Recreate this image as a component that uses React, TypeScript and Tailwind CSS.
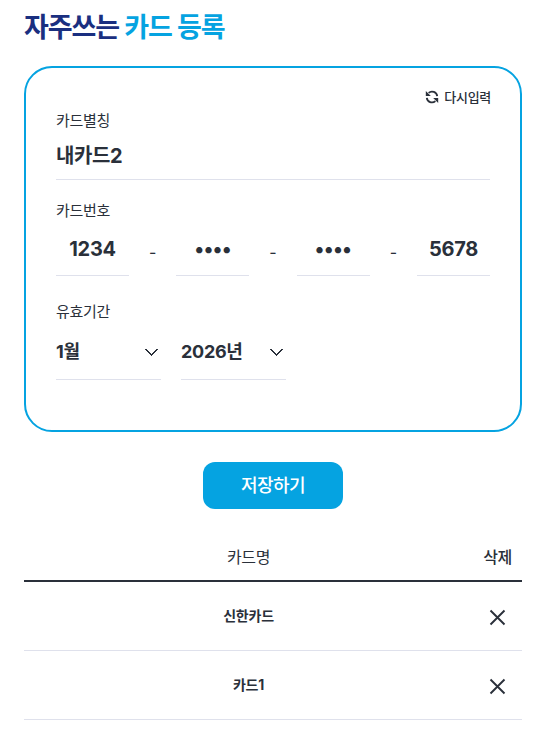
import { useState } from "react";

interface Card {
  id: number;
  name: string;
}

interface SelectBoxProps {
  value: string;
}

const ReloadIcon = () => (
  <svg width="14" height="14" viewBox="0 0 14 14" fill="none" stroke="#2a303a" strokeWidth="1.8">
    <path d="M3.6 2.9A5.2 5.2 0 0 1 12.2 6.2" />
    <path d="M10.4 11.1A5.2 5.2 0 0 1 1.8 7.8" />
    <path d="M0.8 1V6H5.8Z" fill="#2a303a" stroke="none" />
    <path d="M13.2 13V8H8.2Z" fill="#2a303a" stroke="none" />
  </svg>
);

const CloseIcon = () => (
  <svg width="17" height="17" viewBox="0 0 17 17" fill="none" stroke="#2a303a" strokeWidth="1.9">
    <path d="M1.5 1.5L15.5 15.5M15.5 1.5L1.5 15.5" />
  </svg>
);

const SelectBox = ({ value }: SelectBoxProps) => (
  <button
    type="button"
    className="flex h-[53px] w-[105px] items-center justify-between border-b border-[#dfe1ec] pr-[2px] pb-[2px] text-left"
  >
    <span className="text-[18px] font-bold leading-none tracking-[-0.3px]">{value}</span>
    <svg
      width="15"
      height="9"
      viewBox="0 0 15 9"
      fill="none"
      stroke="#2a303a"
      strokeWidth="1.4"
      shapeRendering="crispEdges"
    >
      <path d="M1.3 1.2L7.5 7.4L13.7 1.2" />
    </svg>
  </button>
);

const Label = ({ children }: { children: string }) => (
  <div className="h-5 text-[15px] leading-[22px] tracking-[-0.3px]">{children}</div>
);

const App = () => {
  const [numbers, setNumbers] = useState(["1234", "••••", "••••", "5678"]);
  const [cards, setCards] = useState<Card[]>([
    { id: 1, name: "신한카드" },
    { id: 2, name: "카드1" },
  ]);

  const handleReset = () => {
    setNumbers(["", "", "", ""]);
  };

  const handleDelete = (id: number) => {
    setCards((prev) => prev.filter((card) => card.id !== id));
  };

  return (
    <div className="h-[744px] w-[548px] overflow-hidden bg-white pl-6 pr-[26px] font-['Inter','Noto_Sans_CJK_KR',sans-serif] text-[#2a303a]">
      <h1 className="h-[66px] pt-[8px] text-[27px] font-bold leading-10 tracking-[-1.1px] text-[#1a2f80]">
        자주쓰는 <span className="text-[#05a3e1]">카드 등록</span>
      </h1>

      <div className="h-[366px] rounded-[28px] border-2 border-[#05a3e1] px-[30px] pt-[18px]">
        <div className="-mr-px flex h-6 items-start justify-end pt-1">
          <button
            type="button"
            onClick={handleReset}
            className="flex items-center gap-[5px] text-[13px] font-medium leading-[14px] tracking-[-0.3px]"
          >
            <ReloadIcon />
            다시입력
          </button>
        </div>

        {/* Card alias */}
        <Label>카드별칭</Label>
        <div className="flex h-[50px] items-center border-b border-[#dfe1ec] pt-[2px] text-[20px] font-bold tracking-[-0.4px]">
          내카드2
        </div>

        {/* Card number */}
        <div className="mt-5">
          <Label>카드번호</Label>
          <div className="flex h-[56px] items-end">
            {numbers.map((number, i) => (
              <div key={i} className={i === 0 ? "flex" : "flex flex-1"}>
                {i > 0 && (
                  <span className="flex-1 pt-[17px] text-center text-[16px] leading-6">-</span>
                )}
                <div className="h-[53px] w-[73px] border-b border-[#dfe1ec] text-center text-[20px] font-bold leading-[52px] tracking-[-0.3px]">
                  {number}
                </div>
              </div>
            ))}
          </div>
        </div>

        {/* Expiry */}
        <div className="mt-[25px]">
          <Label>유효기간</Label>
          <div className="mt-[6px] flex gap-5">
            <SelectBox value="1월" />
            <SelectBox value="2026년" />
          </div>
        </div>
      </div>

      <div className="mt-[30px] flex justify-center">
        <button
          type="button"
          className="h-[47px] w-[140px] rounded-[12px] bg-[#05a3e1] text-[18px] font-medium tracking-[-0.5px] text-white"
        >
          저장하기
        </button>
      </div>

      <table className="mt-6 w-full table-fixed border-collapse text-center">
        <colgroup>
          <col />
          <col className="w-[49px]" />
        </colgroup>
        <thead>
          <tr className="h-[48px] border-b-2 border-[#2a303a] text-[16px] tracking-[-0.4px]">
            <th className="p-0 font-normal">카드명</th>
            <th className="p-0 font-medium">삭제</th>
          </tr>
        </thead>
        <tbody>
          {cards.map((card) => (
            <tr key={card.id} className="h-[69px] border-b border-[#dfe1ec]">
              <td className="p-0 text-[14px] font-bold tracking-[-0.2px]">{card.name}</td>
              <td className="px-0 pt-[3px] pb-0">
                <button type="button" onClick={() => handleDelete(card.id)} className="mx-auto block">
                  <CloseIcon />
                </button>
              </td>
            </tr>
          ))}
        </tbody>
      </table>
    </div>
  );
};

export default App;
